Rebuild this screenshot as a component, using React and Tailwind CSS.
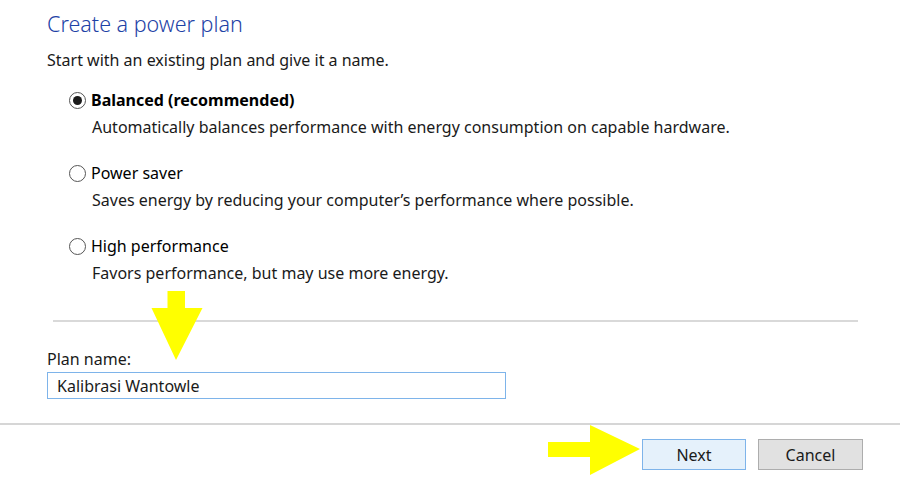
const font = { fontFamily: '"Noto Sans", "Open Sans", sans-serif' };

const plans = [
  {
    name: 'Balanced (recommended)',
    desc: 'Automatically balances performance with energy consumption on capable hardware.',
    checked: true,
  },
  {
    name: 'Power saver',
    desc: 'Saves energy by reducing your computer\u2019s performance where possible.',
  },
  {
    name: 'High performance',
    desc: 'Favors performance, but may use more energy.',
  },
];

function Radio({ checked }) {
  return (
    <span className="flex h-[17px] w-[17px] shrink-0 items-center justify-center rounded-full border border-[#555555] bg-white">
      {checked && <span className="h-[9px] w-[9px] rounded-full bg-[#1a1a1a]" />}
    </span>
  );
}

function PlanOption({ name, desc, checked }) {
  return (
    <div className="flex flex-col">
      <label className="flex h-[20px] items-center gap-[5px]">
        <Radio checked={checked} />
        <span className={checked ? 'font-bold text-black' : 'text-black'}>{name}</span>
      </label>
      <p className="mt-[7px] h-[20px] pl-[23px] leading-[20px] text-[#1a1a1a]">{desc}</p>
    </div>
  );
}

function DownArrow() {
  return (
    <svg className="absolute left-[150px] top-[289px]" width="56" height="74" viewBox="0 0 56 74">
      <defs>
        <filter id="soft" x="-20%" y="-20%" width="140%" height="140%">
          <feGaussianBlur stdDeviation="0.6" />
        </filter>
      </defs>
      <polygon
        points="17.5,2 35,2 35,19 52.5,19 26,71 1.5,19 17.5,19"
        fill="#ffff00"
        filter="url(#soft)"
      />
    </svg>
  );
}

function RightArrow() {
  return (
    <svg className="absolute left-[545px] top-[423px]" width="100" height="56" viewBox="0 0 100 56">
      <polygon
        points="3,19 45,19 45,2 95,26 45,52 45,34 3,34"
        fill="#ffff00"
        filter="url(#soft)"
      />
    </svg>
  );
}

export default function App() {
  return (
    <div className="relative h-[484px] w-[900px] overflow-hidden bg-white text-[16px] text-black" style={font}>
      <div className="flex flex-col px-[47px] pt-[9px]">
        <h1 className="h-[30px] text-[21.5px] font-light leading-[30px] text-[#1e42a6]">Create a power plan</h1>
        <p className="mt-[11px] h-[20px] leading-[20px] text-[#1a1a1a]">Start with an existing plan and give it a name.</p>
        <div className="mt-[20px] flex flex-col gap-[26px] pl-[22px]">
          {plans.map((p) => (
            <PlanOption key={p.name} {...p} />
          ))}
        </div>
        <div className="ml-[6px] mr-[-5px] mt-[37px] h-[2px] bg-[#d9d9d9]" />
        <label className="mt-[27px] h-[20px] leading-[20px] text-[#1a1a1a]">Plan name:</label>
        <div className="mt-[3px] flex h-[27px] w-[459px] items-center border border-[#7eb4ea] px-[9px] text-[#1a1a1a]">
          Kalibrasi Wantowle
        </div>
      </div>
      <div className="mt-[24px] h-[2px] w-full bg-[#d6d6d6]" />
      <div className="flex justify-end gap-[12px] pr-[37px] pt-[14px]">
        <button className="flex h-[31px] w-[104px] items-center justify-center border border-[#7eb4ea] bg-[#e5f1fb] text-[#1a1a1a]">
          Next
        </button>
        <button className="flex h-[31px] w-[105px] items-center justify-center border border-[#adadad] bg-[#e1e1e1] text-[#1a1a1a]">
          Cancel
        </button>
      </div>
      <DownArrow />
      <RightArrow />
    </div>
  );
}
